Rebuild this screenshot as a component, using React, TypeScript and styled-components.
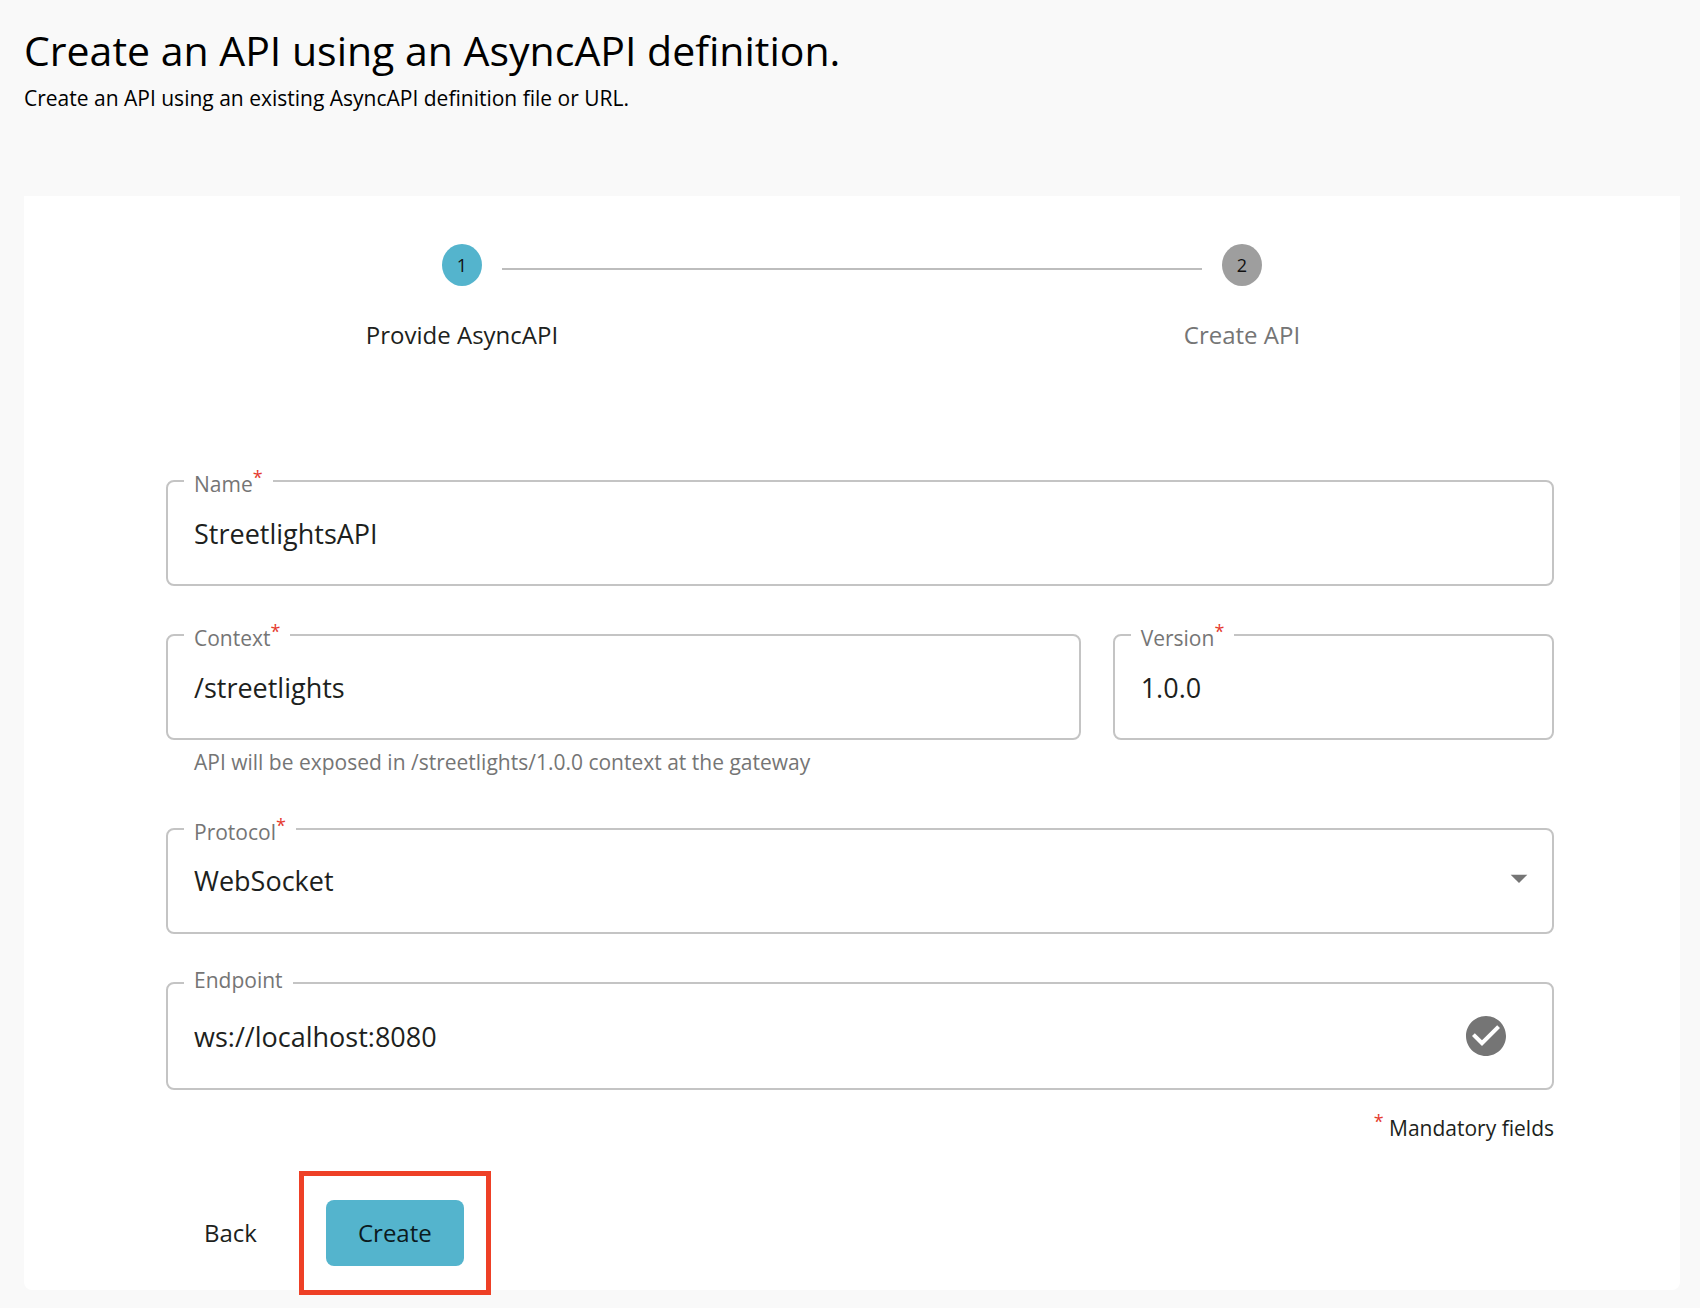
import React, { useId, useState } from "react";
import styled, { createGlobalStyle } from "styled-components";

const color = {
  page: "#f9f9f9",
  paper: "#ffffff",
  ink: "#1d1f20",
  muted: "#757575",
  line: "#c4c4c4",
  connector: "#bdbdbd",
  primary: "#54b4cd",
  onPrimary: "#0b1a1e",
  idle: "#9e9e9e",
  required: "#e53a2e",
  highlight: "#ee4026",
};

const GlobalStyle = createGlobalStyle`
  *, *::before, *::after { box-sizing: border-box; }
  body {
    margin: 0;
    background: ${color.page};
    color: ${color.ink};
    font-family: "Open Sans", "Noto Sans", sans-serif;
    font-size: 21px;
    line-height: 28px;
  }
  button, input, select { font: inherit; color: inherit; }
`;

const Page = styled.main`
  padding: 22px 20px 18px 24px;
`;

const PageHeader = styled.header`
  display: flex;
  flex-direction: column;
  gap: 6px;
  margin-bottom: 84px;
  color: #000;
`;

const Title = styled.h1`
  margin: 0;
  font-size: 41px;
  line-height: 56px;
  font-weight: 400;
`;

const Subtitle = styled.p`
  margin: 0;
`;

const Card = styled.section`
  padding: 48px 48px 24px;
  border-radius: 0 0 8px 8px;
  background: ${color.paper};
`;

const Stepper = styled.ol`
  display: grid;
  grid-template-columns: 1fr 1fr;
  margin: 0 0 127px;
  padding: 0;
  list-style: none;
`;

const Step = styled.li<{ $active: boolean }>`
  display: flex;
  flex-direction: column;
  gap: 31px;
  font-size: 24px;
  line-height: 36px;
  text-align: center;
  color: ${(p) => (p.$active ? color.ink : color.muted)};
`;

const StepTrack = styled.div`
  display: flex;
  align-items: flex-start;
  gap: 20px;
`;

const Connector = styled.span<{ $visible: boolean }>`
  flex: 1;
  height: 2px;
  margin-top: 24px;
  background: ${(p) => (p.$visible ? color.connector : "transparent")};
`;

const StepBadge = styled.span<{ $active: boolean }>`
  display: grid;
  place-items: center;
  width: 40px;
  height: 42px;
  border-radius: 50%;
  background: ${(p) => (p.$active ? color.primary : color.idle)};
  color: #111;
  font-size: 18px;
  line-height: 24px;
`;

const Form = styled.form`
  padding: 0 78px 0 94px;
`;

const Fields = styled.div`
  display: grid;
  grid-template-columns: repeat(12, 1fr);
  gap: 48px 32px;
`;

const Field = styled.div<{ $span: number }>`
  grid-column: span ${(p) => p.$span};
  min-width: 0;
`;

const Outline = styled.div<{ $tall?: boolean }>`
  position: relative;
  display: grid;
  align-items: center;
  height: ${(p) => (p.$tall ? 108 : 106)}px;
  border: 2px solid ${color.line};
  border-radius: 8px;

  & > * {
    grid-area: 1 / 1;
  }
`;

const FieldLabel = styled.label`
  position: absolute;
  top: -18px;
  left: 16px;
  padding: 0 10px;
  background: ${color.paper};
  color: ${color.muted};
  line-height: 28px;
  white-space: nowrap;
`;

const Asterisk = styled.span`
  color: ${color.required};
  font-size: 18px;
  line-height: 26px;
  vertical-align: 8px;
`;

const TextInput = styled.input`
  width: 100%;
  height: 100%;
  padding: 0 26px;
  border: 0;
  border-radius: 8px;
  outline: 0;
  background: transparent;
  font-size: 27px;
`;

const SelectInput = styled.select`
  width: 100%;
  height: 100%;
  padding: 0 26px;
  border: 0;
  border-radius: 8px;
  outline: 0;
  background: transparent;
  appearance: none;
  font-size: 27px;
`;

const ArrowIcon = styled.svg`
  justify-self: end;
  width: 40px;
  height: 40px;
  margin: 0 13px 6px 0;
  fill: ${color.muted};
  pointer-events: none;
`;

const CheckIcon = styled.svg`
  justify-self: end;
  width: 48px;
  height: 48px;
  margin-right: 42px;
  fill: ${color.muted};
`;

const HelperText = styled.p`
  margin: 8px 0 0;
  padding: 0 28px 4px;
  color: ${color.muted};
`;

const MandatoryNote = styled.p`
  margin: 18px 0 58px;
  text-align: right;
`;

const Actions = styled.div`
  display: flex;
  align-items: center;
  gap: 53px;
  padding-left: 22px;
`;

const Button = styled.button<{ $primary?: boolean }>`
  height: 66px;
  padding: 0 ${(p) => (p.$primary ? 32 : 16)}px;
  border: 0;
  border-radius: 8px;
  background: ${(p) => (p.$primary ? color.primary : "transparent")};
  color: ${(p) => (p.$primary ? color.onPrimary : color.ink)};
  font-size: 24px;
  cursor: pointer;
`;

const Highlighted = styled.div`
  position: relative;

  &::after {
    content: "";
    position: absolute;
    inset: -29px -27px;
    border: 5px solid ${color.highlight};
    pointer-events: none;
  }
`;

const steps = ["Provide AsyncAPI", "Create API"];
const protocols = ["WebSocket", "WebSub", "SSE"];

type TextFieldProps = {
  label: string;
  value: string;
  onChange: (value: string) => void;
  span?: number;
  required?: boolean;
  helper?: string;
  valid?: boolean;
};

function TextField({ label, value, onChange, span = 12, required, helper, valid }: TextFieldProps) {
  const id = useId();
  return (
    <Field $span={span}>
      <Outline $tall={valid}>
        <TextInput id={id} type="text" value={value} required={required} onChange={(e) => onChange(e.target.value)} />
        <FieldLabel htmlFor={id}>
          {label}
          {required && <Asterisk>*</Asterisk>}
        </FieldLabel>
        {valid && (
          <CheckIcon viewBox="0 0 24 24" role="img" aria-label="Valid endpoint">
            <path d="M12 2C6.48 2 2 6.48 2 12s4.48 10 10 10 10-4.48 10-10S17.52 2 12 2zm-2 15l-5-5 1.41-1.41L10 14.17l7.59-7.59L19 8l-9 9z" />
          </CheckIcon>
        )}
      </Outline>
      {helper && <HelperText>{helper}</HelperText>}
    </Field>
  );
}

export default function App() {
  const [name, setName] = useState("StreetlightsAPI");
  const [context, setContext] = useState("/streetlights");
  const [version, setVersion] = useState("1.0.0");
  const [protocol, setProtocol] = useState("WebSocket");
  const [endpoint, setEndpoint] = useState("ws://localhost:8080");
  const protocolId = useId();

  return (
    <>
      <GlobalStyle />
      <Page>
        <PageHeader>
          <Title>Create an API using an AsyncAPI definition.</Title>
          <Subtitle>Create an API using an existing AsyncAPI definition file or URL.</Subtitle>
        </PageHeader>
        <Card>
          <Stepper>
            {steps.map((label, i) => (
              <Step key={label} $active={i === 0}>
                <StepTrack>
                  <Connector $visible={i > 0} />
                  <StepBadge $active={i === 0}>{i + 1}</StepBadge>
                  <Connector $visible={i < steps.length - 1} />
                </StepTrack>
                <span>{label}</span>
              </Step>
            ))}
          </Stepper>
          <Form onSubmit={(e) => e.preventDefault()}>
            <Fields>
              <TextField label="Name" value={name} onChange={setName} required />
              <TextField
                label="Context"
                value={context}
                onChange={setContext}
                span={8}
                required
                helper={`API will be exposed in ${context}/${version} context at the gateway`}
              />
              <TextField label="Version" value={version} onChange={setVersion} span={4} required />
              <Field $span={12}>
                <Outline>
                  <SelectInput id={protocolId} value={protocol} required onChange={(e) => setProtocol(e.target.value)}>
                    {protocols.map((p) => (
                      <option key={p}>{p}</option>
                    ))}
                  </SelectInput>
                  <ArrowIcon viewBox="0 0 24 24" aria-hidden="true">
                    <path d="M7 10l5 5 5-5z" />
                  </ArrowIcon>
                  <FieldLabel htmlFor={protocolId}>
                    Protocol<Asterisk>*</Asterisk>
                  </FieldLabel>
                </Outline>
              </Field>
              <TextField label="Endpoint" value={endpoint} onChange={setEndpoint} valid />
            </Fields>
            <MandatoryNote>
              <Asterisk>*</Asterisk> Mandatory fields
            </MandatoryNote>
            <Actions>
              <Button type="button">Back</Button>
              <Highlighted>
                <Button type="submit" $primary>
                  Create
                </Button>
              </Highlighted>
            </Actions>
          </Form>
        </Card>
      </Page>
    </>
  );
}
